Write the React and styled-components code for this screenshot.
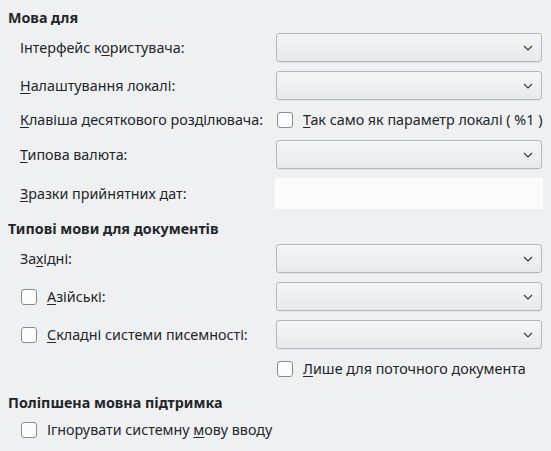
import React from "react";
import styled, { createGlobalStyle } from "styled-components";

const GlobalStyle = createGlobalStyle`
  body {
    margin: 0;
    background: #eff0f1;
    color: #232629;
    font-family: "Noto Sans", "DejaVu Sans", sans-serif;
    font-size: 14.3px;
  }
`;

const Chevron = () => (
  <svg width="10" height="6" viewBox="0 0 10 6">
    <polyline points="1,1 5,5 9,1" fill="none" stroke="#31363b" strokeWidth="1.1" />
  </svg>
);

const App = () => {
  return (
    <Page>
      <GlobalStyle />

      <Heading>Мова для</Heading>
      <Grid>
        <Label>Інтерфейс к<u>о</u>ристувача:</Label>
        <Combo><Chevron /></Combo>

        <Label><u>Н</u>алаштування локалі:</Label>
        <Combo><Chevron /></Combo>

        <Label><u>К</u>лавіша десяткового розділювача:</Label>
        <CheckRow>
          <Box />
          <span><u>Т</u>ак само як параметр локалі ( %1 )</span>
        </CheckRow>

        <Label><u>Т</u>ипова валюта:</Label>
        <Combo><Chevron /></Combo>

        <Label><u>З</u>разки прийнятних дат:</Label>
        <DateField />
      </Grid>

      <Heading $top={10}>Типові мови для документів</Heading>
      <Grid>
        <Label>За<u>х</u>ідні:</Label>
        <Combo><Chevron /></Combo>

        <CheckRow>
          <Box />
          <span><u>А</u>зійські:</span>
        </CheckRow>
        <Combo><Chevron /></Combo>

        <CheckRow>
          <Box />
          <span><u>С</u>кладні системи писемності:</span>
        </CheckRow>
        <Combo><Chevron /></Combo>

        <span />
        <CheckRow>
          <Box />
          <span><u>Л</u>ише для поточного документа</span>
        </CheckRow>
      </Grid>

      <Heading $top={13}>Поліпшена мовна підтримка</Heading>
      <Single>
        <CheckRow>
          <Box />
          <span>Ігнорувати системну <u>м</u>ову вводу</span>
        </CheckRow>
      </Single>
    </Page>
  );
};

export default App;

const Page = styled.div`
  padding: 8px 8px 0;
  width: 535px;
`;

const Heading = styled.div`
  margin-top: ${(p) => p.$top || 0}px;
  font-weight: 700;
  line-height: 20px;
`;

const Grid = styled.div`
  display: grid;
  grid-template-columns: 250px 266px;
  column-gap: 6px;
  row-gap: 9px;
  align-items: center;
  margin-top: 5px;
  padding-left: 12px;
`;

const Single = styled.div`
  margin-top: 6px;
  padding-left: 12px;
`;

const Label = styled.div`
  line-height: 20px;
  white-space: nowrap;

  u {
    text-underline-offset: 2px;
  }
`;

const Combo = styled.div`
  box-sizing: border-box;
  height: 29px;
  border: 1px solid #b5b8ba;
  border-radius: 3px;
  background: linear-gradient(#f4f5f5, #e8e9ea);
  box-shadow: 0 1px 0 rgba(0, 0, 0, 0.04);
  display: flex;
  align-items: center;
  justify-content: flex-end;
  padding-right: 8px;
`;

const DateField = styled.div`
  height: 31px;
  width: 268px;
  margin-left: -1px;
  background: #fcfcfc;
`;

const CheckRow = styled.label`
  display: flex;
  align-items: center;
  gap: 10px;
  height: 22px;
  white-space: nowrap;
  line-height: 20px;

  u {
    text-underline-offset: 2px;
  }
`;

const Box = styled.span`
  box-sizing: border-box;
  width: 16px;
  height: 16px;
  margin-left: 1px;
  border: 1px solid #898d90;
  border-radius: 3px;
  background: #fcfcfc;
  flex: none;
`;
